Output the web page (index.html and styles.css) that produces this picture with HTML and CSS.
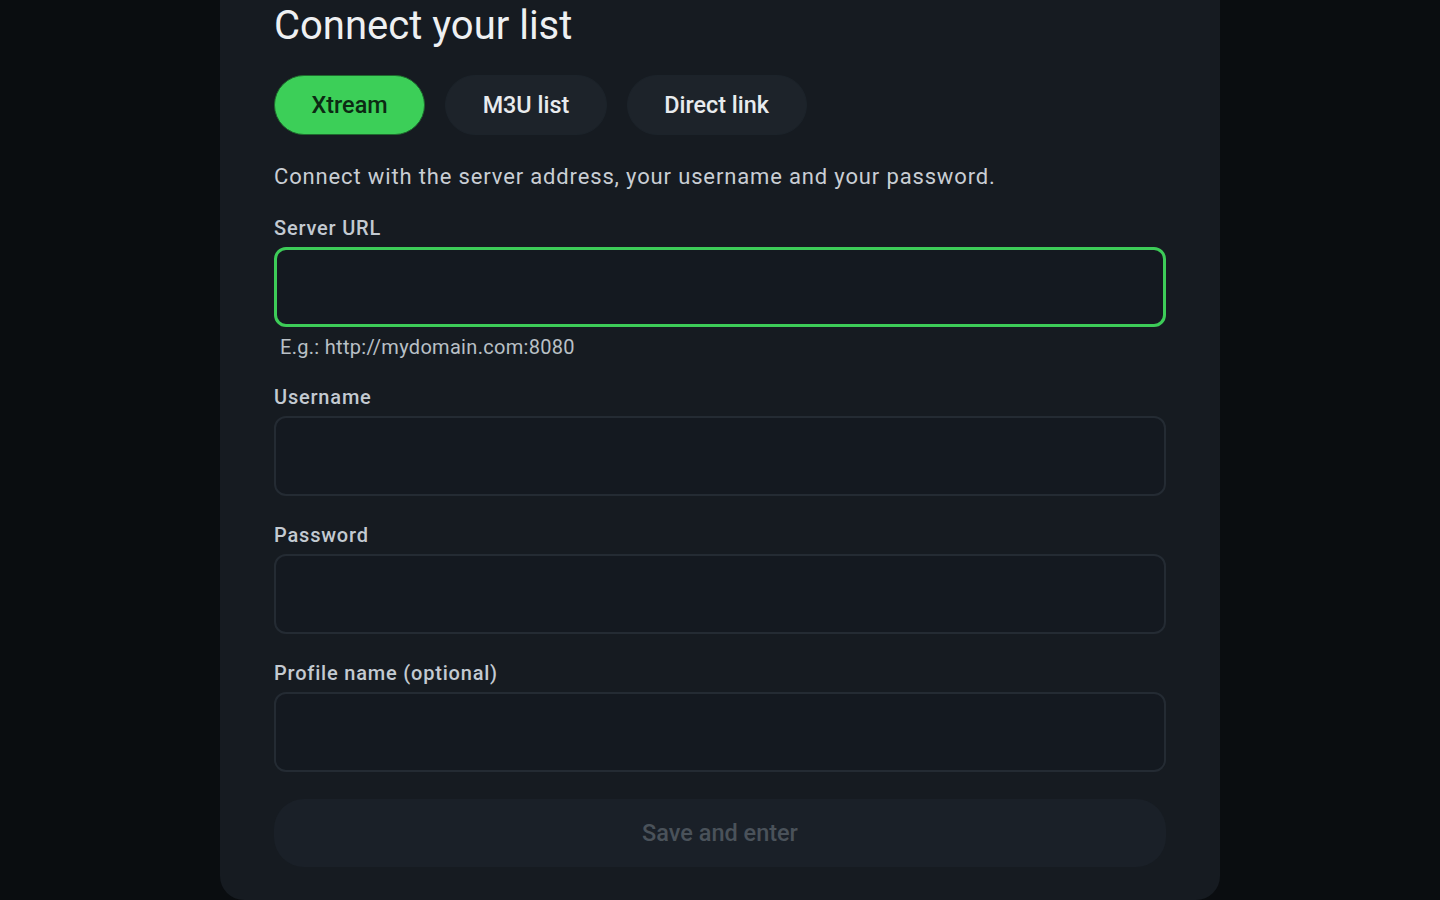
FILE: index.html
```html
<!DOCTYPE html>
<html lang="en">
<head>
<meta charset="utf-8">
<title>Connect your list</title>
<link rel="stylesheet" href="styles.css">
</head>
<body>
<main class="page">
  <section class="card">
    <h1 class="title">Connect your list</h1>
    <div class="tabs">
      <button class="tab tab-active">Xtream</button>
      <button class="tab">M3U list</button>
      <button class="tab">Direct link</button>
    </div>
    <p class="desc">Connect with the server address, your username and your password.</p>
    <form class="form">
      <div class="field">
        <label class="label">Server URL</label>
        <div class="input input-focus"></div>
        <div class="hint">E.g.: http://mydomain.com:8080</div>
      </div>
      <div class="field">
        <label class="label">Username</label>
        <div class="input"></div>
      </div>
      <div class="field">
        <label class="label">Password</label>
        <div class="input"></div>
      </div>
      <div class="field">
        <label class="label">Profile name (optional)</label>
        <div class="input"></div>
      </div>
      <button type="button" class="save">Save and enter</button>
    </form>
  </section>
</main>
</body>
</html>
```

FILE: styles.css
```css
* { box-sizing: border-box; }
html, body {
  margin: 0;
  padding: 0;
  height: 100%;
  overflow: hidden;
  background: #0a0d10;
  font-family: Roboto, "Noto Sans", "Liberation Sans", sans-serif;
}
.page {
  display: flex;
  justify-content: center;
}
.card {
  width: 1000px;
  margin-top: -40px;
  padding: 42px 54px 33px;
  background: #161b21;
  border-radius: 0 0 24px 24px;
}
.title {
  margin: 0;
  font-size: 40px;
  line-height: 48px;
  font-weight: 400;
  color: #eef0f2;
}
.tabs {
  display: flex;
  gap: 20px;
  margin-top: 25px;
}
.tab {
  height: 60px;
  padding: 0 36.5px;
  border-radius: 30px;
  border: 1px solid #1c232a;
  background: #1d232a;
  color: #e8ebee;
  font-family: Roboto, "Noto Sans", sans-serif;
  font-size: 23.4px;
  font-weight: 500;
}
.tab-active {
  background: #3ccf58;
  border-color: #1f6a2e;
  color: #0c2a13;
}
.desc {
  margin: 27px 0 0;
  font-size: 22px;
  line-height: 30px;
  color: #c9ced4;
  letter-spacing: 0.85px;
}
.form {
  display: flex;
  flex-direction: column;
  gap: 27px;
  margin-top: 24px;
}
.field {
  display: flex;
  flex-direction: column;
}
.label {
  font-size: 20px;
  line-height: 24px;
  font-weight: 500;
  letter-spacing: 0.8px;
  color: #c3cad1;
}
.input {
  margin-top: 7px;
  height: 80px;
  border: 2px solid #242b33;
  border-radius: 12px;
  background: #141920;
}
.input-focus {
  border: 3px solid #3dcc58;
}
.hint {
  margin-top: 10px;
  padding-left: 6px;
  font-size: 20px;
  line-height: 21px;
  letter-spacing: 0.3px;
  color: #b9c0c6;
}
.save {
  height: 68px;
  border: none;
  border-radius: 30px;
  background: #1a2028;
  color: #4a525a;
  font-family: Roboto, "Noto Sans", sans-serif;
  font-size: 23.5px;
  font-weight: 500;
}
```
